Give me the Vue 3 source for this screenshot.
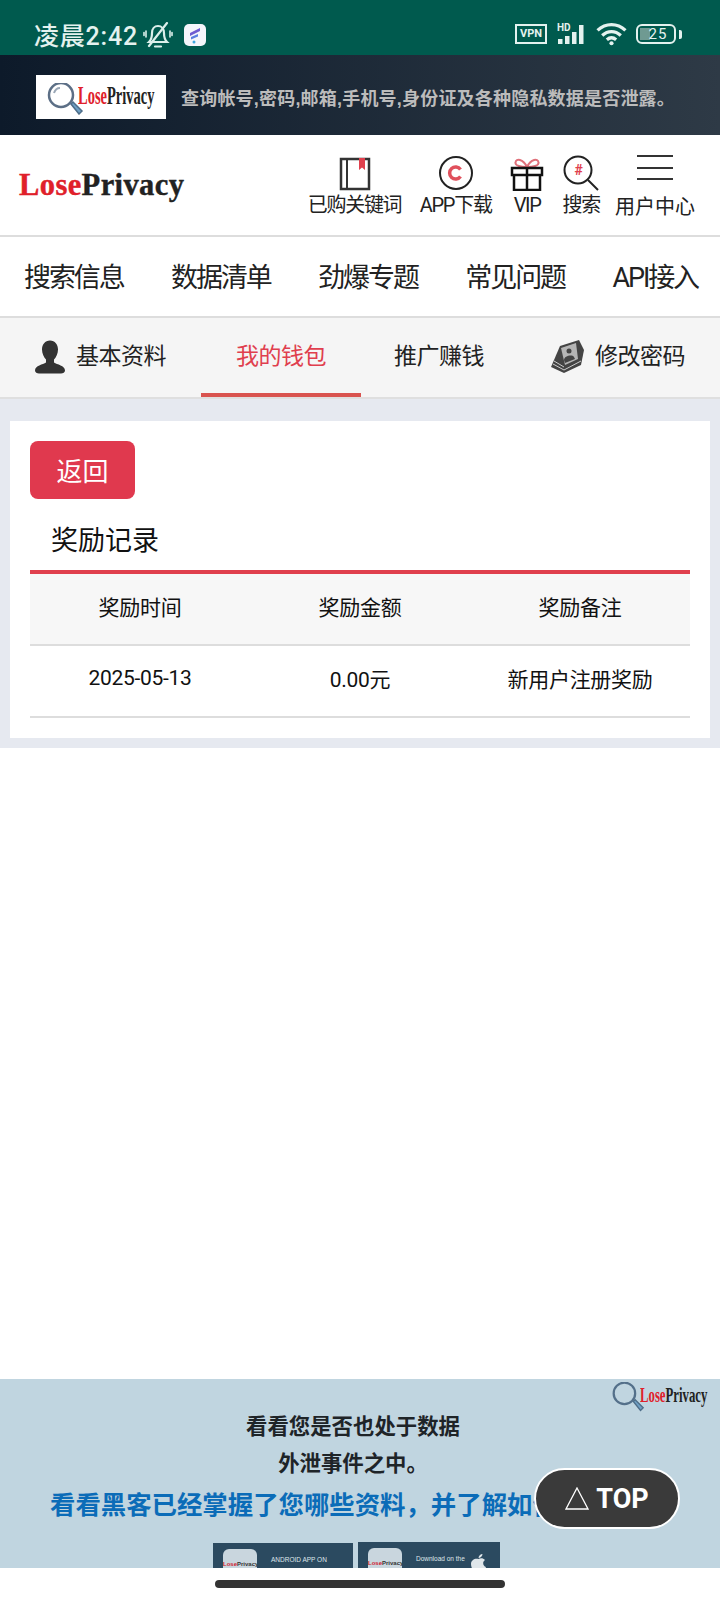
<template>
  <div class="page">
    <div class="status">
      <div class="status-left">
        <span class="time">凌晨2:42</span>
        <svg class="bell" width="30" height="26" viewBox="0 0 30 26" fill="none" stroke="#dcefeb" stroke-width="2.200" stroke-linecap="round">
          <path d="M6 20c2-2 3-4 3-9 0-4 2.500-7 6-7s6 3 6 7c0 5 1 7 3 9z" />
          <path d="M12 24.500h6" />
          <path d="M6 24 24 1" />
          <path d="M3 9v6M1 10.500v3M27 9v6M29 10.500v3" stroke-width="1.600" />
        </svg>
        <svg class="appicon" width="22" height="22" viewBox="0 0 22 22">
          <rect width="22" height="22" rx="5" fill="#f4f6fb" />
          <path d="M6 9 16 4v3L6 12z" fill="#6d5bd0" />
          <path d="M7 13l7-3v2.500l-7 3z" fill="#5a7fe0" />
          <circle cx="10" cy="18" r="1.500" fill="#3fa7e0" />
        </svg>
      </div>
      <div class="status-right">
        <span class="vpn">VPN</span>
        <svg width="32" height="22" viewBox="0 0 32 22" fill="#e4f2ef">
          <text x="0" y="8" font-size="10" font-weight="700" font-family="Roboto, sans-serif">HD</text>
          <rect x="1" y="16" width="4.500" height="5" />
          <rect x="8" y="13" width="4.500" height="8" />
          <rect x="15" y="9" width="4.500" height="12" />
          <rect x="22" y="2" width="4.500" height="19" />
        </svg>
        <svg class="wifi" width="31" height="24" viewBox="0 0 30 23" fill="none" stroke="#e4f2ef" stroke-width="3.200">
          <path d="M1.500 8c8-7.500 19-7.500 27 0" />
          <path d="M6 13c5.500-5 12.500-5 18 0" />
          <path d="M10.500 17c3-2.500 6-2.500 9 0" />
          <circle cx="15" cy="20.500" r="2" fill="#e4f2ef" stroke="none" />
        </svg>
        <div class="battery">
          <div class="battery-body">
            <i class="battery-fill"></i>
            <span>25</span>
          </div>
          <i class="battery-tip"></i>
        </div>
      </div>
    </div>

    <div class="banner">
      <div class="banner-logo">
        <svg width="38" height="32" viewBox="0 0 38 32" fill="none">
          <circle cx="15" cy="12" r="12" stroke="#5c6f86" stroke-width="2.500" />
          <path d="M8 10c1-3 3-5 6-5" stroke="#9aa7b6" stroke-width="2" />
          <path d="M25 21l2-2 9 9-3 3z" fill="#6fa0c4" stroke="#4e6d88" stroke-width="1.500" />
        </svg>
        <span class="brand banner-brand"><em>Lose</em>Privacy</span>
      </div>
      <p class="banner-text">查询帐号,密码,邮箱,手机号,身份证及各种隐私数据是否泄露。</p>
    </div>

    <header class="header">
      <span class="brand header-brand"><em>Lose</em>Privacy</span>
      <div class="tools">
        <div class="tool">
          <svg width="32" height="36" viewBox="0 0 32 36" fill="none">
            <rect x="2" y="4" width="28" height="30" stroke="#333" stroke-width="2.500" />
            <path d="M8 4v30" stroke="#333" stroke-width="2" />
            <path d="M20 3h6v12l-3-2.500-3 2.500z" fill="#e0404d" />
          </svg>
          <span>已购关键词</span>
        </div>
        <div class="tool">
          <svg width="36" height="36" viewBox="0 0 36 36" fill="none">
            <circle cx="18" cy="18" r="16" stroke="#222" stroke-width="2" />
            <path d="M22.500 14.500a6 6 0 1 0 0 7" stroke="#e0505c" stroke-width="3.500" />
          </svg>
          <span>APP下载</span>
        </div>
        <div class="tool">
          <svg width="34" height="36" viewBox="0 0 34 36" fill="none">
            <path d="M17 12C13 4 6 3 5.500 7.500 5 11 11 12 17 12c6 0 12-1 11.500-4.500C28 3 21 4 17 12z" stroke="#e0707a" stroke-width="2" />
            <path d="M2 13h30v7H2zM4 20h26v15H4zM17 13v22" stroke="#111" stroke-width="2.500" />
          </svg>
          <span>VIP</span>
        </div>
        <div class="tool">
          <svg width="36" height="36" viewBox="0 0 36 36" fill="none">
            <circle cx="15" cy="15" r="13.500" stroke="#222" stroke-width="2" />
            <path d="M25 25l10 10" stroke="#222" stroke-width="2" />
            <text x="15" y="20" text-anchor="middle" font-size="14" font-weight="700" fill="#e0404d" font-family="Roboto, sans-serif">#</text>
          </svg>
          <span>搜索</span>
        </div>
        <div class="tool tool-menu">
          <svg width="36" height="36" viewBox="0 0 36 36" stroke="#333" stroke-width="2">
            <path d="M0 1h36M0 13h36M0 24h36" />
          </svg>
          <span>用户中心</span>
        </div>
      </div>
    </header>

    <nav class="nav">
      <a v-for="item in navItems" :key="item">{{ item }}</a>
    </nav>

    <div class="tabs">
      <div class="tab">
        <svg width="30" height="34" viewBox="0 0 30 33" fill="#333">
          <path d="M15 0c5 0 8 4 8 9 0 4-2 8-4 10v3c3 2 11 3 11 8 0 2-2 3-4 3H4c-2 0-4-1-4-3 0-5 8-6 11-8v-3C9 17 7 13 7 9c0-5 3-9 8-9z" />
        </svg>
        <span>基本资料</span>
      </div>
      <div class="tab active"><span>我的钱包</span></div>
      <div class="tab"><span>推广赚钱</span></div>
      <div class="tab">
        <svg width="33" height="33" viewBox="0 0 33 33">
          <path d="M9 6 28 0l5 10-3 15-17 8-13-6z" fill="#444" />
          <path d="M10 8l15-5 2 16-13 6z" fill="#b5b5b5" />
          <circle cx="18" cy="11" r="2.500" fill="#444" />
          <path d="M13 20c0-4 8-6 10-3l1 2-10 4z" fill="#444" />
          <path d="M2 24l11 6 17-9M3 21l10 6" stroke="#ccc" stroke-width="1" fill="none" />
        </svg>
        <span>修改密码</span>
      </div>
    </div>

    <main class="content">
      <section class="card">
        <button class="back">返回</button>
        <h2 class="title">奖励记录</h2>
        <div class="table">
          <div class="row head">
            <span>奖励时间</span>
            <span>奖励金额</span>
            <span>奖励备注</span>
          </div>
          <div v-for="r in records" :key="r.date" class="row">
            <span>{{ r.date }}</span>
            <span>{{ r.amount }}</span>
            <span>{{ r.note }}</span>
          </div>
        </div>
      </section>
    </main>

    <div class="spacer"></div>

    <footer class="promo">
      <div class="promo-logo">
        <svg width="34" height="30" viewBox="0 0 38 32" fill="none">
          <circle cx="15" cy="12" r="12" stroke="#54708a" stroke-width="2.500" />
          <path d="M25 21l2-2 9 9-3 3z" fill="#6fa0c4" stroke="#4e6d88" stroke-width="1.500" />
        </svg>
        <span class="brand promo-brand"><em>Lose</em>Privacy</span>
      </div>
      <p class="promo-line">看看您是否也处于数据</p>
      <p class="promo-line">外泄事件之中。</p>
      <p class="promo-blue">看看黑客已经掌握了您哪些资料，并了解如何保护</p>
      <div class="stores">
        <div class="store store-a">
          <span class="store-icon"><b>Lose</b>Privacy</span>
          <span class="store-label">ANDROID APP ON</span>
        </div>
        <div class="store store-b">
          <span class="store-icon"><b>Lose</b>Privacy</span>
          <span class="store-label">Download on the</span>
          <svg width="15" height="18" viewBox="0 0 15 18" fill="#dfe6ea">
            <path d="M7.500 5C9 4 12 3.500 14 6c-3 2-2 6 1 7-1 3-3 5-4.500 5-1 0-2-.7-3-.7s-2 .7-3 .7C2 18 0 13 0 10c0-4 4-6 7.500-5zM7.500 4c0-2 2-4 4-4 0 2-2 4-4 4z" />
          </svg>
        </div>
      </div>
      <button class="top">
        <svg width="24" height="23" viewBox="0 0 24 23" fill="none" stroke="#fff" stroke-width="1.300">
          <path d="M12 1 23 22H1z" />
        </svg>
        <span>TOP</span>
      </button>
    </footer>

    <div class="gesture"><i></i></div>
  </div>
</template>

<script setup>
const navItems = ["搜索信息", "数据清单", "劲爆专题", "常见问题", "API接入"];
const records = [
  { date: "2025-05-13", amount: "0.00元", note: "新用户注册奖励" },
];
</script>

<style>
html,
body {
  margin: 0;
  background: #fff;
}
</style>

<style scoped>
.page {
  width: 720px;
  height: 1600px;
  display: flex;
  flex-direction: column;
  overflow: hidden;
  background: #fff;
  color: #222;
  font-family: Roboto, "Noto Sans CJK SC", sans-serif;
}

.status {
  height: 55px;
  flex: none;
  display: flex;
  align-items: center;
  justify-content: space-between;
  padding: 20px 38px 5px 34px;
  box-sizing: border-box;
  background: #005a4e;
  color: #e4f2ef;
}
.status-left,
.status-right {
  display: flex;
  align-items: center;
}
.status-right {
  margin-top: -2px;
}
.time {
  font-size: 25px;
  font-weight: 500;
  letter-spacing: 0.8px;
  line-height: 30px;
  padding-top: 4px;
}
.bell {
  margin-left: 5px;
}
.appicon {
  margin-left: 11px;
}
.vpn {
  width: 32px;
  height: 20px;
  box-sizing: border-box;
  border: 2px solid #e4f2ef;
  font-size: 11px;
  font-weight: 700;
  line-height: 16px;
  text-align: center;
  margin-right: 10px;
}
.wifi {
  margin: 0 9px 0 7px;
}
.battery {
  display: flex;
  align-items: center;
}
.battery-body {
  position: relative;
  width: 40px;
  height: 20px;
  box-sizing: border-box;
  border: 2px solid #e4f2ef;
  border-radius: 6px;
  font-size: 15px;
  line-height: 16px;
  text-align: center;
  letter-spacing: 1px;
  padding-left: 4px;
}
.battery-body span {
  position: relative;
}
.battery-fill {
  position: absolute;
  left: 2px;
  top: 2px;
  bottom: 2px;
  width: 10px;
  background: #6f9a92;
}
.battery-tip {
  width: 3px;
  height: 9px;
  margin-left: 3px;
  background: #e4f2ef;
  border-radius: 0 2px 2px 0;
}

.banner {
  height: 80px;
  flex: none;
  display: flex;
  align-items: center;
  padding-left: 36px;
  box-sizing: border-box;
  background: linear-gradient(90deg, #0d1a2a, #2e3a46);
}
.banner-logo {
  width: 130px;
  height: 44px;
  box-sizing: border-box;
  padding: 8px 0 0 10px;
  background: #fff;
  display: flex;
  margin-top: 4px;
  overflow: hidden;
}
.banner-logo svg {
  flex: none;
}
.banner-text {
  margin: 0 0 0 15px;
  padding-top: 7px;
  font-size: 18px;
  font-weight: 700;
  letter-spacing: 0.2px;
  white-space: nowrap;
  color: #bcbcbc;
  font-family: "Liberation Sans", "Noto Sans CJK SC", sans-serif;
  line-height: 24px;
}

.brand {
  font-family: "Liberation Serif", serif;
  font-weight: 700;
  color: #222;
  display: inline-block;
  white-space: nowrap;
  transform-origin: left center;
}
.brand em {
  font-style: normal;
  color: #e0202a;
}
.banner-brand {
  font-size: 25px;
  line-height: 26px;
  margin-left: -6px;
  transform: scaleX(0.58);
}
.header-brand {
  font-size: 30.500px;
  line-height: 36px;
  letter-spacing: 0.4px;
  -webkit-text-stroke: 0.4px currentColor;
}
.header-brand em {
  -webkit-text-stroke: 0.4px #e0202a;
}
.promo-brand {
  font-size: 22px;
  line-height: 26px;
  margin-left: -5px;
  transform: scaleX(0.58);
}

.header {
  height: 102px;
  flex: none;
  display: flex;
  align-items: center;
  justify-content: space-between;
  padding: 0 25px 0 19px;
  box-sizing: border-box;
  border-bottom: 2px solid #ddd;
}
.tools {
  display: flex;
  align-items: flex-start;
  gap: 18.500px;
  align-self: flex-start;
  padding-top: 20px;
}
.tool {
  display: flex;
  flex-direction: column;
  align-items: center;
  font-size: 20px;
  letter-spacing: -1.300px;
  color: #222;
}
.tool span {
  line-height: 24px;
  margin-top: 2px;
  white-space: nowrap;
}
.tool-menu {
  margin-left: -3.500px;
  letter-spacing: 0;
}
.tool-menu span {
  margin-top: 4px;
}

.nav {
  height: 81px;
  flex: none;
  display: flex;
  align-items: center;
  gap: 47.500px;
  padding: 0 0 3px 24px;
  box-sizing: border-box;
  border-bottom: 2px solid #ddd;
  font-size: 27px;
  letter-spacing: -2.100px;
  white-space: nowrap;
}

.tabs {
  height: 81px;
  flex: none;
  display: flex;
  box-sizing: border-box;
  background: #f5f5f5;
  border-bottom: 2px solid #dfdfdf;
  font-size: 23px;
  letter-spacing: -0.5px;
}
.tab {
  display: flex;
  align-items: center;
  padding: 0 35px 8px;
  box-sizing: border-box;
  white-space: nowrap;
  height: 79px;
}
.tab svg {
  margin-right: 11px;
  margin-top: 6px;
}
.tab:nth-child(3) {
  padding-left: 33px;
}
.tab:last-child {
  padding-left: 32px;
}
.active {
  color: #e03f4e;
  border-bottom: 4px solid #d9534f;
  padding-bottom: 4px;
}

.content {
  flex: none;
  height: 349px;
  box-sizing: border-box;
  padding: 22px 10px 10px;
  background: #e6e9f0;
}
.card {
  background: #fff;
  padding: 20px;
  height: 317px;
  box-sizing: border-box;
}
.back {
  display: block;
  width: 105px;
  height: 58px;
  border: 0;
  border-radius: 8px;
  background: #e0394e;
  color: #fff;
  font-family: inherit;
  font-size: 26px;
  padding: 0 0 2px;
}
.title {
  margin: 0;
  padding-left: 21px;
  height: 71px;
  box-sizing: border-box;
  font-size: 27px;
  font-weight: 400;
  line-height: 84px;
  color: #111;
}
.table {
  border-top: 4px solid #e0404d;
}
.row {
  display: grid;
  grid-template-columns: repeat(3, 1fr);
  height: 72px;
  box-sizing: border-box;
  border-bottom: 2px solid #ddd;
  align-items: center;
  text-align: center;
  font-size: 21px;
  letter-spacing: -0.3px;
  color: #111;
}
.row span {
  padding-bottom: 6px;
}
.head {
  background: #f7f7f7;
}

.spacer {
  flex: 1;
}

.promo {
  position: relative;
  height: 189px;
  flex: none;
  overflow: hidden;
  background: #c0d5e0;
  text-align: center;
  font-family: "Liberation Sans", "Noto Sans CJK SC", sans-serif;
  padding-top: 34px;
  box-sizing: border-box;
}
.promo-logo {
  position: absolute;
  left: 611px;
  top: 3px;
  width: 109px;
  display: flex;
  overflow: hidden;
}
.promo-logo svg {
  flex: none;
}
.promo-line {
  margin: 0 0 8px;
  padding-right: 14px;
  font-size: 21.400px;
  font-weight: 700;
  line-height: 29px;
  color: #1e2428;
}
.promo-blue {
  margin: 9px 0 0 50px;
  width: 670px;
  overflow: hidden;
  font-size: 25.400px;
  font-weight: 700;
  line-height: 34px;
  color: #0b6cb8;
  text-align: left;
  white-space: nowrap;
}
.stores {
  display: flex;
  justify-content: center;
  gap: 5px;
  margin-top: 21px;
  padding-right: 7px;
}
.store {
  height: 44px;
  background: #2b4a60;
  display: flex;
  align-items: flex-start;
  color: #dfe6ea;
  overflow: hidden;
  box-sizing: border-box;
  padding: 6px 0 0 10px;
}
.store-a {
  width: 140px;
}
.store-b {
  width: 142px;
  margin-top: -1px;
}
.store-b svg {
  margin: 6px 0 0 6px;
}
.store-icon {
  width: 34px;
  height: 36px;
  flex: none;
  border-radius: 6px;
  background: #c9d6de;
  font-size: 6px;
  font-weight: 700;
  color: #333;
  padding-top: 12px;
  box-sizing: border-box;
  white-space: nowrap;
  overflow: hidden;
}
.store-icon b {
  color: #d02030;
}
.store-label {
  font-size: 6.500px;
  margin-left: 14px;
  padding-top: 4px;
  line-height: 14px;
  white-space: nowrap;
}
.top {
  position: absolute;
  left: 534px;
  top: 89px;
  width: 146px;
  height: 61px;
  display: flex;
  align-items: center;
  justify-content: center;
  gap: 7px;
  border: 2px solid #fff;
  border-radius: 31px;
  background: #3a3a3a;
  color: #fff;
  font-family: Roboto, sans-serif;
  font-size: 27px;
  font-weight: 700;
  padding: 0;
}

.gesture {
  height: 32px;
  flex: none;
  padding-top: 12px;
  box-sizing: border-box;
  display: flex;
  justify-content: center;
  background: #fff;
}
.gesture i {
  width: 290px;
  height: 8px;
  border-radius: 4px;
  background: #333;
}
</style>
